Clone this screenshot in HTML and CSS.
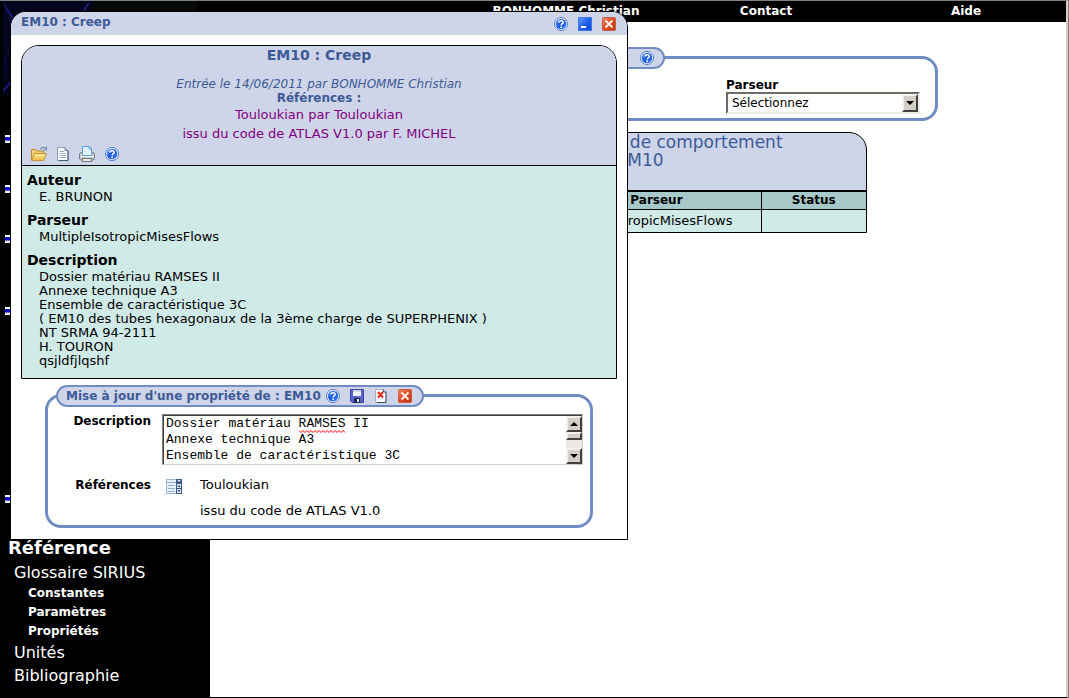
FILE: index.html
```html
<!DOCTYPE html>
<html lang="fr">
<head>
<meta charset="utf-8">
<title>EM10 : Creep</title>
<link rel="stylesheet" href="styles.css">
</head>
<body>
<svg class="defs" width="0" height="0" aria-hidden="true">
  <defs>
    <linearGradient id="g-help" x1="0" y1="0" x2="1" y2="1"><stop offset="0" stop-color="#6aa0ff"/><stop offset=".5" stop-color="#1b57d8"/><stop offset="1" stop-color="#3f8bff"/></linearGradient>
    <linearGradient id="g-min" x1="0" y1="0" x2="1" y2="1"><stop offset="0" stop-color="#6d9cf8"/><stop offset=".5" stop-color="#1f5fea"/><stop offset="1" stop-color="#1048d0"/></linearGradient>
    <linearGradient id="g-close" x1="0" y1="0" x2="1" y2="1"><stop offset="0" stop-color="#ee8a6c"/><stop offset=".5" stop-color="#dc4a28"/><stop offset="1" stop-color="#b83412"/></linearGradient>
    <linearGradient id="g-fold" x1="0" y1="0" x2="0" y2="1"><stop offset="0" stop-color="#fdf0a8"/><stop offset="1" stop-color="#eeb63c"/></linearGradient>
    <symbol id="help" viewBox="0 0 14 14"><circle cx="7" cy="7" r="6.5" fill="#fff" stroke="#3a6bc8" stroke-width=".9"/><circle cx="7" cy="7" r="5.3" fill="url(#g-help)"/><path d="M5 5.5C5 3.2 9.200 3.200 9.200 5.400C9.200 6.700 7.100 6.800 7.100 8.500" fill="none" stroke="#fff" stroke-width="1.500"/><rect x="6.300" y="9.500" width="1.600" height="1.500" fill="#fff"/></symbol>
    <symbol id="minimize" viewBox="0 0 14 14"><rect x=".5" y=".5" width="13" height="13" fill="url(#g-min)" stroke="#3e76e6"/><rect x="3" y="9" width="5" height="2" fill="#fff"/></symbol>
    <symbol id="close" viewBox="0 0 14 14"><rect x=".5" y=".5" width="13" height="13" rx="1" fill="url(#g-close)" stroke="#cd5a3c"/><path d="M3.500 3.500L10.500 10.500M10.500 3.500L3.500 10.500" stroke="#fff0e8" stroke-width="1.900"/></symbol>
    <symbol id="folder" viewBox="0 0 16 16"><path d="M.5 14V3.500H5L6.500 5H12.500V7" fill="#f2cf72" stroke="#b48b35"/><path d="M3.500 7.500H15.500L12.500 14.500H.7Z" fill="url(#g-fold)" stroke="#c49433"/><path d="M9.500 3.500C10 1 13 .8 14.500 2.500M15.500 .5V4H12" fill="none" stroke="#7890ac" stroke-width="1.200"/></symbol>
    <symbol id="page" viewBox="0 0 12 14"><path d="M.5 .5H8L11 3.500V13.500H.5Z" fill="#f8fbff" stroke="#8a9bb4"/><path d="M8 .5V3.500H11" fill="#c5d3e8" stroke="#6e84a4"/><path d="M2.500 4.500H7M2.500 6.500H9M2.500 8.500H9M2.500 10.500H9" stroke="#9eb2cf"/><path d="M11 4V13.500H2" fill="none" stroke="#46586e"/></symbol>
    <symbol id="printer" viewBox="0 0 16 16"><rect x=".5" y="6.500" width="15" height="7.500" rx="2" fill="#c9ccd1" stroke="#73777f"/><path d="M3.500 9.500V.5H10.500L12.500 2.500V9.500Z" fill="#dff2ff" stroke="#5da0dc"/><path d="M10 .5V3H12.500" fill="none" stroke="#5da0dc"/><path d="M1.500 10.500H14.500" stroke="#f4f4f4"/><rect x="3.500" y="12.500" width="9" height="3" fill="#e8eaed" stroke="#777"/></symbol>
    <symbol id="save" viewBox="0 0 14 14"><path d="M.5 .5H13.500V13.500H2L.5 12Z" fill="#5a62cc" stroke="#3a42a4"/><rect x="3" y="1" width="8" height="6" fill="#eef2fb"/><path d="M3 2H11" stroke="#a9b8dd"/><rect x="4" y="9" width="6" height="5" fill="#20264f"/><rect x="7" y="10" width="2" height="3" fill="#e8ecf7"/></symbol>
    <symbol id="delete" viewBox="0 0 12 14"><path d="M.5 .5H8.500L11 3V13.500H.5Z" fill="#fbfcff" stroke="#a3afc3"/><path d="M8.500 .5V3H11V13.500H2" fill="none" stroke="#43526b"/><path d="M3 3L8 8.500M8 3L3 8.500" stroke="#e52a18" stroke-width="1.900"/></symbol>
    <symbol id="list" viewBox="0 0 16 15"><rect width="16" height="15" fill="#e7f0fb"/><rect width="10" height="4" fill="#8fabcb"/><rect x="1" y="1" width="9" height="2" fill="#e6f0fb"/><path d="M0 .5H16M.5 0V15M0 14.500H16" stroke="#9bb4cf"/><rect x="10" y="0" width="6" height="15" fill="#3d5a84"/><path d="M11.500 1H14.500L13 3Z" fill="#fff"/><rect x="11" y="5" width="4" height="4" fill="#dce7f5"/><rect x="11" y="10" width="4" height="4" fill="#dce7f5"/><path d="M11.500 8L13 6L14.500 8ZM11.500 11H14.500L13 13Z" fill="#27456d"/><path d="M2 6.500H9M2 9.500H9M2 12.500H9" stroke="#91b1d5"/></symbol>
  </defs>
</svg>

<div class="page">
  <aside class="sidebar">
    <svg class="starfield" width="194" height="94" viewBox="0 0 194 94" aria-hidden="true">
      <rect width="194" height="94" fill="#050907"/>
      <rect width="90" height="94" fill="#04041c"/>
      <path d="M0 2L14 24M86 2L72 22M0 90L14 74" stroke="#20208c" stroke-width="1.500"/>
      <path d="M0 0L10 30L0 70" fill="none" stroke="#0c0c40"/>
    </svg>
    <ul class="flags">
      <li></li><li></li><li></li><li class="gap-m"></li><li class="gap-l"></li>
    </ul>
    <nav class="menu">
      <h2>Référence</h2>
      <a class="item" href="#">Glossaire SIRIUS</a>
      <a class="sub" href="#">Constantes</a>
      <a class="sub" href="#">Paramètres</a>
      <a class="sub" href="#">Propriétés</a>
      <a class="item" href="#">Unités</a>
      <a class="item" href="#">Bibliographie</a>
    </nav>
  </aside>

  <main class="main">
    <nav class="topbar">
      <a href="#">BONHOMME Christian</a>
      <a href="#">Contact</a>
      <a href="#">Aide</a>
    </nav>
    <div class="content">
      <section class="group filter">
        <div class="badge"><button class="icon" type="button" aria-label="Aide"><svg width="14" height="14"><use href="#help"/></svg></button></div>
        <div class="field">
          <label for="parser">Parseur</label>
          <div class="combo">
            <select id="parser"><option>Sélectionnez</option></select>
            <span class="btn3d combo-arrow"><svg width="8" height="4" viewBox="0 0 8 4"><path d="M0 0H8L4 4Z"/></svg></span>
          </div>
        </div>
      </section>
      <section class="results">
        <h1>Modèles et lois de comportement<br>EM10</h1>
        <table>
          <thead><tr><th class="c-name"></th><th class="c-parser">Parseur</th><th class="c-status">Status</th></tr></thead>
          <tbody><tr><td></td><td class="parser">MultipleIsotropicMisesFlows</td><td></td></tr></tbody>
        </table>
      </section>
    </div>
  </main>
</div>

<div class="window" role="dialog" aria-labelledby="wtitle">
  <header class="titlebar">
    <span id="wtitle">EM10 : Creep</span>
    <div class="tools">
      <button class="icon" type="button" aria-label="Aide"><svg width="14" height="14"><use href="#help"/></svg></button>
      <button class="icon" type="button" aria-label="Réduire"><svg width="14" height="14"><use href="#minimize"/></svg></button>
      <button class="icon" type="button" aria-label="Fermer"><svg width="14" height="14"><use href="#close"/></svg></button>
    </div>
  </header>
  <div class="window-body">
    <article class="card">
      <header class="card-head">
        <h2>EM10 : Creep</h2>
        <p class="entry">Entrée le 14/06/2011 par BONHOMME Christian</p>
        <p class="refs">Références :</p>
        <a href="#">Touloukian par Touloukian</a>
        <a href="#">issu du code de ATLAS V1.0 par F. MICHEL</a>
        <div class="card-tools">
          <button class="icon" type="button" aria-label="Ouvrir"><svg width="16" height="16"><use href="#folder"/></svg></button>
          <button class="icon" type="button" aria-label="Document"><svg width="12" height="14"><use href="#page"/></svg></button>
          <button class="icon" type="button" aria-label="Imprimer"><svg width="16" height="16"><use href="#printer"/></svg></button>
          <button class="icon" type="button" aria-label="Aide"><svg width="14" height="14"><use href="#help"/></svg></button>
        </div>
      </header>
      <dl class="details">
        <dt>Auteur</dt><dd>E. BRUNON</dd>
        <dt>Parseur</dt><dd>MultipleIsotropicMisesFlows</dd>
        <dt>Description</dt>
        <dd>Dossier matériau RAMSES II<br>Annexe technique A3<br>Ensemble de caractéristique 3C<br>( EM10 des tubes hexagonaux de la 3ème charge de SUPERPHENIX )<br>NT SRMA 94-2111<br>H. TOURON<br>qsjldfjlqshf</dd>
      </dl>
    </article>

    <form class="group editor">
      <div class="badge">
        <span>Mise à jour d'une propriété de : EM10</span>
        <div class="tools">
          <button class="icon" type="button" aria-label="Aide"><svg width="14" height="14"><use href="#help"/></svg></button>
          <button class="icon" type="button" aria-label="Enregistrer"><svg width="14" height="14"><use href="#save"/></svg></button>
          <button class="icon" type="button" aria-label="Supprimer"><svg width="14" height="14"><use href="#delete"/></svg></button>
          <button class="icon" type="button" aria-label="Fermer"><svg width="14" height="14"><use href="#close"/></svg></button>
        </div>
      </div>
      <div class="row">
        <label for="desc">Description</label>
        <div class="memo">
          <textarea id="desc" rows="3" spellcheck="false">Dossier matériau RAMSES II
Annexe technique A3
Ensemble de caractéristique 3C
( EM10 des tubes hexagonaux de la 3ème charge de SUPERPHENIX )</textarea>
          <svg class="squiggle" width="47" height="3" viewBox="0 0 47 3"><path d="M0 .5L2 2.500L4 .5L6 2.500L8 .5L10 2.500L12 .5L14 2.500L16 .5L18 2.500L20 .5L22 2.500L24 .5L26 2.500L28 .5L30 2.500L32 .5L34 2.500L36 .5L38 2.500L40 .5L42 2.500L44 .5L46 2.500" fill="none" stroke="#f00"/></svg>
          <div class="scroll" aria-hidden="true">
            <span class="btn3d"><svg width="8" height="4" viewBox="0 0 8 4"><path d="M0 4H8L4 0Z"/></svg></span>
            <span class="btn3d thumb"></span>
            <span class="track"></span>
            <span class="btn3d"><svg width="8" height="4" viewBox="0 0 8 4"><path d="M0 0H8L4 4Z"/></svg></span>
          </div>
        </div>
      </div>
      <div class="row refs-row">
        <span class="label">Références</span>
        <button class="icon" type="button" aria-label="Choisir"><svg width="16" height="15"><use href="#list"/></svg></button>
        <ul><li>Touloukian</li><li>issu du code de ATLAS V1.0</li></ul>
      </div>
    </form>
  </div>
</div>
</body>
</html>
```
FILE: styles.css
```css
* { box-sizing: border-box; }
html, body { height: 100%; }
body {
  margin: 0;
  background: #fff;
  color: #000;
  font: 12px/14px "DejaVu Sans", Verdana, sans-serif;
}
h1, h2, p, ul, dl, dd { margin: 0; padding: 0; }
ul { list-style: none; }
a { text-decoration: none; }
.defs { position: absolute; }
.icon { display: inline-flex; padding: 0; border: 0; background: none; }
.icon svg { display: block; }

.page {
  display: flex;
  min-height: 100vh;
  border-top: 1px solid #808080;
  border-right: 3px ridge #d4d0c8;
  border-bottom: 1px solid #000;
}
.sidebar {
  display: flex;
  flex-direction: column;
  flex: none;
  width: 210px;
  background: #000;
  color: #fff;
}
.starfield { display: block; margin-left: 3px; }
.flags { flex: 1; padding: 40px 0 0 5px; }
.flags li {
  width: 6px;
  height: 8px;
  margin-bottom: 42px;
  background: linear-gradient(#fff 2px, #1a1af0 2px, #0000c0 5px, #ddd 6px, #fff);
}
.flags .gap-m { margin-top: 64px; }
.flags .gap-l { margin-top: 180px; margin-bottom: 0; }
.menu { display: flex; flex-direction: column; padding: 0 8px 10px; }
.menu a { color: #fff; }
.menu h2 { font-size: 18px; line-height: 26px; }
.menu .item { padding-left: 6px; font-size: 16px; line-height: 23px; }
.menu .sub { padding-left: 20px; font-weight: bold; line-height: 19px; }

.main { flex: 1; min-width: 0; }
.topbar { display: flex; justify-content: flex-end; height: 21px; background: #000; }
.topbar a { width: 200px; color: #fff; font-weight: bold; line-height: 20px; text-align: center; }
.content { display: flex; flex-direction: column; align-items: center; padding: 34px 0 0 4px; }

.group { position: relative; border: 3px solid #708cc2; border-radius: 16px; }
.badge {
  position: absolute;
  top: -12px;
  display: flex;
  align-items: center;
  height: 22px;
  border: 2px solid #708cc2;
  border-radius: 11px;
  background: #cfd5e9;
  color: #3c5a96;
  font-weight: bold;
}
.filter { display: flex; justify-content: flex-end; width: 596px; padding: 19px 15px 4px; }
.filter .badge { left: 10px; width: 310px; justify-content: flex-end; padding-right: 9px; }
.field { width: 194px; }
.field label { display: block; font-weight: bold; }
.combo { display: flex; position: relative; border: 2px solid; border-color: #6e6e68 #eee #eee #6e6e68; }
.combo select { flex: 1; height: 18px; padding: 0 4px; border: 0; background: #fff; color: #000; font: inherit; appearance: none; }
.combo-arrow { position: absolute; top: 0; right: 0; height: 18px; }
.btn3d {
  display: flex;
  align-items: center;
  justify-content: center;
  width: 16px;
  border: 2px solid;
  border-color: #f4f2ee #404040 #404040 #f4f2ee;
  background: #d4d0c8;
}

.results { width: 454px; margin-top: 11px; border: 1px solid #000; border-radius: 18px 18px 0 0; background: #cfd5e9; overflow: hidden; }
.results h1 { height: 57px; color: #3c5a96; font-size: 17px; font-weight: normal; line-height: 18px; text-align: center; }
.results table { width: 100%; border-collapse: collapse; border-top: 2px solid #000; }
.results th { height: 18px; padding: 0; background: #a7c9c9; border-bottom: 1px solid #000; }
.results td { height: 23px; padding: 0; background: #d0eae8; font-size: 13px; }
.results th + th, .results td + td { border-left: 1px solid #000; }
.results .parser { padding-right: 28px; text-align: right; }
.c-parser { width: 206px; }
.c-status { width: 105px; }

.window {
  position: absolute;
  top: 11px;
  left: 10px;
  width: 618px;
  border: 1px solid #000;
  border-radius: 16px 16px 0 0;
  background: #fff;
  overflow: hidden;
}
.titlebar { display: flex; justify-content: space-between; align-items: center; height: 23px; padding: 0 11px 0 10px; background: #cfd5e9; color: #3c5a96; font-weight: bold; }
.titlebar span { padding-bottom: 4px; }
.tools { display: flex; gap: 10px; }
.window-body { padding: 10px 10px 11px; }
.card { border: 1px solid #000; border-radius: 18px 18px 0 0; overflow: hidden; }
.card-head { display: flex; flex-direction: column; align-items: center; background: #cfd5e9; border-bottom: 1px solid #000; color: #3c5a96; }
.card-head h2 { font-size: 14px; line-height: 18px; margin-bottom: 13px; }
.entry { font-style: italic; }
.refs { font-weight: bold; }
.card-head a { color: #800080; font-size: 13px; line-height: 19px; }
.card-tools { display: flex; align-self: flex-start; align-items: center; gap: 10px; height: 22px; padding-left: 9px; }
.details { padding: 4px 5px 10px; background: #d0eae8; }
.details dt { font-size: 14px; font-weight: bold; line-height: 20px; }
.details dd { padding: 0 0 6px 12px; font-size: 13px; }
.details dd:last-child { padding-bottom: 0; }

.editor { margin: 15px 24px 0; padding: 17px 7px 7px; }
.editor .badge { left: 8px; gap: 5px; padding: 0 10px 0 8px; }
.row { display: grid; grid-template-columns: 96px 1fr; gap: 11px; }
.row label, .label { font-weight: bold; text-align: right; }
.memo { position: relative; display: flex; border: 1px solid; border-color: #808080 #d4d0c8 #d4d0c8 #808080; }
.memo textarea {
  flex: 1;
  min-width: 0;
  height: 49px;
  padding: 0 2px;
  border: 1px solid #404040;
  border-width: 1px 0 0 1px;
  outline: 0;
  resize: none;
  overflow: hidden;
  font: 13px/16px "Liberation Mono", "Courier New", monospace;
}
.squiggle { position: absolute; top: 15px; left: 136px; }
.scroll { display: flex; flex-direction: column; width: 16px; border-top: 1px solid #404040; }
.scroll .btn3d { height: 16px; }
.scroll .thumb { height: 8px; }
.track { flex: 1; background: #ebe8e3; }
.refs-row { grid-template-columns: 96px 20px 1fr; margin-top: 13px; }
.refs-row ul { display: grid; gap: 12px; padding-left: 7px; font-size: 13px; }
.refs-row .icon { align-self: start; padding: 1px 0 0 4px; }
```
